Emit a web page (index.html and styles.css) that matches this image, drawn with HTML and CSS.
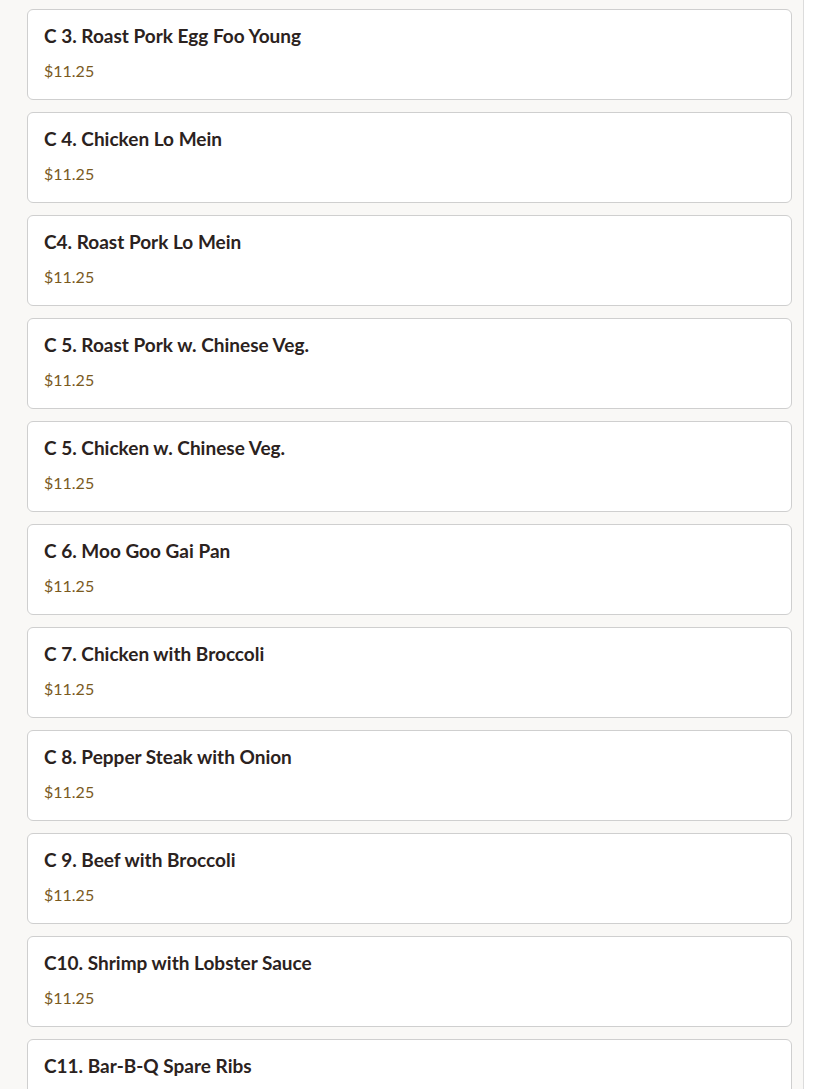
FILE: index.html
```html
<!DOCTYPE html>
<html lang="en">
<head>
<meta charset="utf-8">
<title>Menu</title>
<link rel="stylesheet" href="styles.css">
</head>
<body>
<div class="panel">
  <div class="list">
    <div class="card"><div class="name">C 3. Roast Pork Egg Foo Young</div><div class="price">$11.25</div></div>
    <div class="card"><div class="name">C 4. Chicken Lo Mein</div><div class="price">$11.25</div></div>
    <div class="card"><div class="name">C4. Roast Pork Lo Mein</div><div class="price">$11.25</div></div>
    <div class="card"><div class="name">C 5. Roast Pork w. Chinese Veg.</div><div class="price">$11.25</div></div>
    <div class="card"><div class="name">C 5. Chicken w. Chinese Veg.</div><div class="price">$11.25</div></div>
    <div class="card"><div class="name">C 6. Moo Goo Gai Pan</div><div class="price">$11.25</div></div>
    <div class="card"><div class="name">C 7. Chicken with Broccoli</div><div class="price">$11.25</div></div>
    <div class="card"><div class="name">C 8. Pepper Steak with Onion</div><div class="price">$11.25</div></div>
    <div class="card"><div class="name">C 9. Beef with Broccoli</div><div class="price">$11.25</div></div>
    <div class="card"><div class="name">C10. Shrimp with Lobster Sauce</div><div class="price">$11.25</div></div>
    <div class="card"><div class="name">C11. Bar-B-Q Spare Ribs</div><div class="price">$11.25</div></div>
  </div>
</div>
</body>
</html>
```
FILE: styles.css
```css
html, body {
  margin: 0;
  padding: 0;
  background: #ffffff;
  height: 1089px;
  overflow: hidden;
}
.panel {
  width: 804px;
  min-height: 1089px;
  box-sizing: border-box;
  background: #f9f8f6;
  border-right: 1px solid #dcdcdc;
  padding: 9px 11px 0 27px;
}
.list {
  display: flex;
  flex-direction: column;
  gap: 12px;
}
.card {
  background: #ffffff;
  border: 1px solid #cfcfcf;
  border-radius: 6px;
  height: 91px;
  box-sizing: border-box;
  padding: 15px 16px 0 16px;
  font-family: "Lato", "Open Sans", sans-serif;
}
.name {
  font-size: 19px;
  font-weight: 700;
  color: #2b2220;
  line-height: 22px;
}
.price {
  margin-top: 14px;
  font-size: 16px;
  color: #7a5a1e;
  line-height: 20px;
}
```
